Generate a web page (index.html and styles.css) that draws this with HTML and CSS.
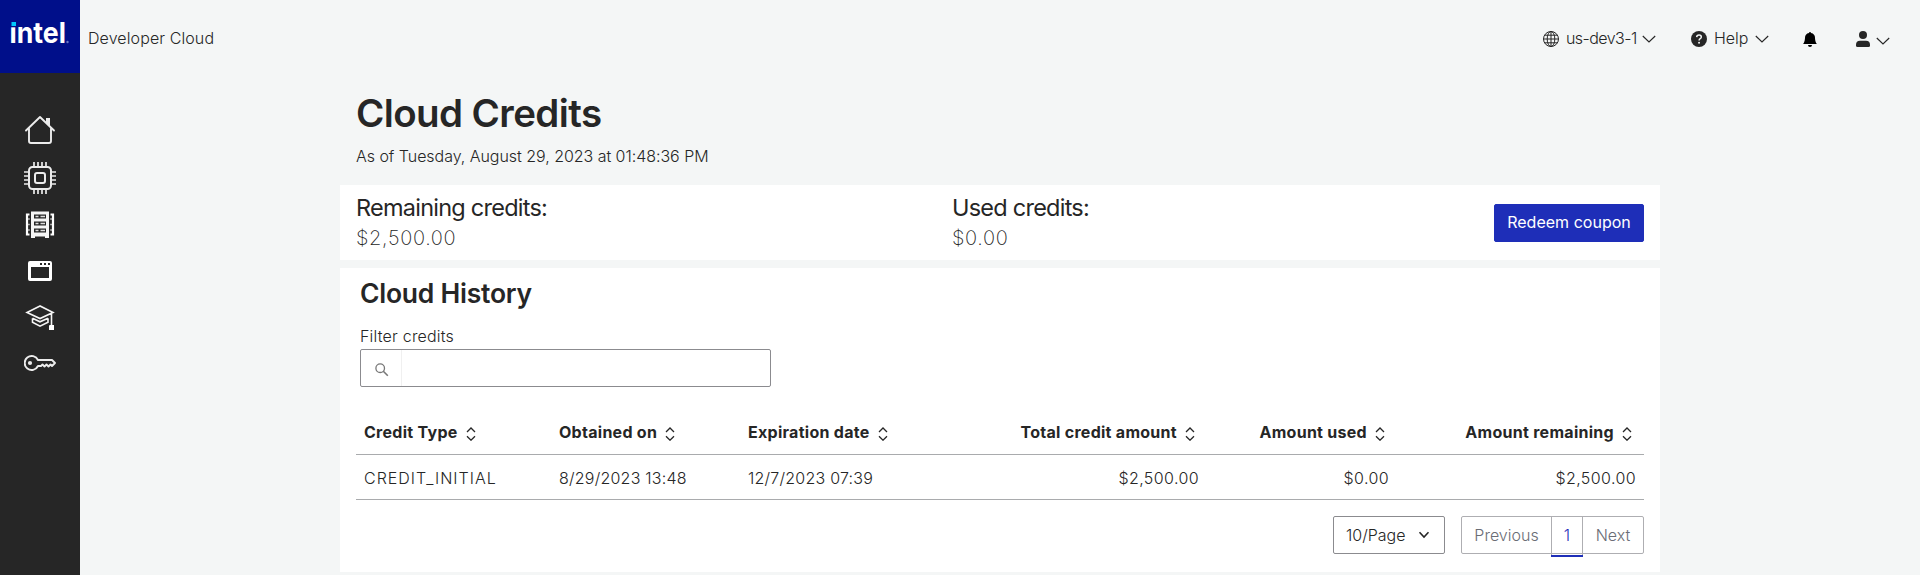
FILE: index.html
```
<!DOCTYPE html>
<html lang="en">
<head>
<meta charset="utf-8">
<title>Cloud Credits</title>
<link rel="stylesheet" href="styles.css">
</head>
<body>
<svg class="defs" width="0" height="0">
  <symbol id="sort" viewBox="0 0 10 14"><path d="M1 5 5 1l4 4M1 9.2l4 4 4-4" fill="none" stroke="#262626" stroke-width="1.300"/></symbol>
  <symbol id="chev" viewBox="0 0 14 8"><path d="m.8 1 6.2 6 6.200-6" fill="none" stroke="#262626" stroke-width="1.150"/></symbol>
</svg>
<div class="app">
  <nav class="sidebar">
    <a class="brand">
      <svg width="80" height="73" viewBox="0 0 80 73">
        <text class="brand-text" x="9.500" y="43.200" textLength="56.500" lengthAdjust="spacingAndGlyphs">intel</text>
        <path d="M8 18h9.500v9.300H8z" fill="#000f8a"/>
        <path d="M11.500 22h4.500v4h-4.500z" fill="#00c7fd"/>
        <circle cx="67.500" cy="42" r="1.200" fill="#6a78c4"/>
      </svg>
    </a>
    <div class="links">
      <svg class="ico" width="32" height="32" viewBox="0 0 32 32"><g fill="none" stroke="#ececec" stroke-width="1.900" stroke-linejoin="round" stroke-linecap="round"><path d="M2 16.500 16 3l14 13.500M5 14.500V27q0 2 2 2h18q2 0 2-2V14.500"/></g><path d="M22 4h4v9l-4-4z" fill="#ececec"/></svg>
      <svg class="ico" width="32" height="32" viewBox="0 0 32 32"><g fill="none" stroke="#ececec" stroke-width="2"><rect x="5" y="5" width="22" height="22" rx="3.500"/><rect x="11" y="11" width="10" height="10" rx="2"/><path d="M10 0v5m4-5v5m4-5v5m4-5v5M10 27v5m4-5v5m4-5v5m4-5v5M0 10h5m-5 4h5m-5 4h5m-5 4h5M27 10h5m-5 4h5m-5 4h5m-5 4h5" stroke-width="1.700"/></g></svg>
      <svg class="ico" width="32" height="28" viewBox="0 0 32 28"><path d="M7 .5h18V27h-4v-1.500H11V27H7z" fill="#f5f5f5"/><path d="M10 3.500h12v4H10zm0 7h12v4H10zm0 7h12v4H10z" fill="#262626"/><path d="M11.500 4.700h3v1.600h-3zm5 0h4.500v1.600h-4.500zm-5 7h3v1.600h-3zm5 0h4.500v1.600h-4.500zm-5 7h3v1.600h-3zm5 0h4.500v1.600h-4.500z" fill="#ddd"/><path d="M5.500 3.500H3v20h2.500M26.500 3.500H29v20h-2.500" fill="none" stroke="#fff" stroke-width="2.200"/><path d="M4 8h1.800M4 13.500h1.800M4 19h1.800M28 8h-1.800M28 13.500h-1.800M28 19h-1.800" stroke="#bbb" stroke-width="1.500"/></svg>
      <svg class="ico" width="32" height="32" viewBox="0 0 32 32"><path fill-rule="evenodd" d="M6 6h20q2 0 2 2v16q0 2-2 2H6q-2 0-2-2V8q0-2 2-2zm1 6v11h18V12zM16 8v2h2V8zm4 0v2h2V8zm4 0v2h2V8z" fill="#fff"/></svg>
      <svg class="ico" width="32" height="28" viewBox="0 0 32 28"><path d="M16 3 3 9.500 16 15.500 29 9.500zM8.500 15.200v4l7.500 4 8-4v-4M8.500 15.200l7.500 3.600 8-3.600M27.500 10v12" fill="none" stroke="#f5f5f5" stroke-width="1.600"/><path d="M25.500 22h4.500v5h-5v-4z" fill="#fff"/></svg>
      <svg class="ico" width="32" height="18" viewBox="0 0 32 18"><path d="M14 6h14l3 3-3 3-1.500-1.500-2 2-2-2-2 2-2-2-1.500 1.500H14A7 7 0 1 1 14 6z" fill="none" stroke="#ececec" stroke-width="1.900" stroke-linejoin="round"/><circle cx="6" cy="9" r="2.100" fill="#ececec"/></svg>
    </div>
  </nav>
  <div class="page">
    <header class="top">
      <span class="product">Developer Cloud</span>
      <div class="menu">
        <span class="item region"><svg width="16" height="16" viewBox="0 0 16 16"><g fill="none" stroke="#262626" stroke-width="1"><circle cx="8" cy="8" r="7.500"/><ellipse cx="8" cy="8" rx="3.800" ry="7.500"/><path d="M8 .5v15M.5 8h15M1.700 4.200h12.600M1.700 11.800h12.600"/></g></svg><span class="region-name">us-dev3-1</span><svg class="caret" width="14" height="8"><use href="#chev"/></svg></span>
        <span class="item help"><svg width="16" height="16" viewBox="0 0 16 16"><circle cx="8" cy="8" r="8" fill="#262626"/><path d="M5.700 6.100Q5.800 4 8.100 4q2.200 0 2.200 1.900 0 1.100-1.100 1.800-1.100.7-1.100 1.800" fill="none" stroke="#f4f6f6" stroke-width="1.500"/><circle cx="8.050" cy="11.700" r="1" fill="#f4f6f6"/></svg><span>Help</span><svg class="caret" width="14" height="8"><use href="#chev"/></svg></span>
        <svg class="bell" width="16" height="16" viewBox="0 0 16 16"><path d="M8 16a2 2 0 0 0 2-2H6a2 2 0 0 0 2 2zm1-14.100a1 1 0 1 0-2 0A5 5 0 0 0 3 6.800C3 8 2.500 12 1 13h14c-1.500-1-2-5-2-6.200a5 5 0 0 0-4-4.900z" fill="#000"/></svg>
        <span class="item user"><svg width="14" height="16" viewBox="0 0 14 16"><circle cx="7" cy="4" r="4" fill="#262626"/><path d="M4 9.800h6q4 0 4 4V14.500q0 1.500-1.500 1.500h-11Q0 16 0 14.500v-.7q0-4 4-4z" fill="#262626"/></svg><svg class="caret" width="14" height="8"><use href="#chev"/></svg></span>
      </div>
    </header>
    <main class="content">
      <h1>Cloud Credits</h1>
      <p class="asof">As of Tuesday, August 29, 2023 at 01:48:36 PM</p>
      <section class="card summary">
        <div class="stat"><h2>Remaining credits:</h2><span>$2,500.00</span></div>
        <div class="stat"><h2>Used credits:</h2><span>$0.00</span></div>
        <button class="primary">Redeem coupon</button>
      </section>
      <section class="card history">
        <h2>Cloud History</h2>
        <label for="filter">Filter credits</label>
        <div class="search"><span class="addon"><svg width="14" height="14" viewBox="0 0 14 14"><circle cx="5.200" cy="5.200" r="4.300" fill="none" stroke="#777" stroke-width="1.300"/><path d="m8.300 8.300 4.500 4.500" stroke="#777" stroke-width="1.600"/></svg></span><input id="filter" type="text"></div>
        <table>
          <colgroup><col class="c1"><col class="c2"><col class="c3"><col class="c4"><col class="c5"><col class="c6"></colgroup>
          <thead><tr>
            <th>Credit Type<svg class="sort"><use href="#sort"/></svg></th>
            <th>Obtained on<svg class="sort"><use href="#sort"/></svg></th>
            <th>Expiration date<svg class="sort"><use href="#sort"/></svg></th>
            <th class="num">Total credit amount<svg class="sort"><use href="#sort"/></svg></th>
            <th class="num">Amount used<svg class="sort"><use href="#sort"/></svg></th>
            <th class="num">Amount remaining<svg class="sort"><use href="#sort"/></svg></th>
          </tr></thead>
          <tbody><tr>
            <td class="type">CREDIT_INITIAL</td><td>8/29/2023 13:48</td><td>12/7/2023 07:39</td>
            <td class="num">$2,500.00</td><td class="num">$0.00</td><td class="num">$2,500.00</td>
          </tr></tbody>
        </table>
        <div class="paging">
          <span class="size">10/Page<svg width="12" height="8" viewBox="0 0 12 8"><path d="m1.500 1.300 4.500 4.700 4.500-4.700" fill="none" stroke="#262626" stroke-width="1.600"/></svg></span>
          <div class="pages"><span class="prev">Previous</span><span class="current">1</span><span class="next">Next</span></div>
        </div>
      </section>
    </main>
  </div>
</div>
</body>
</html>
```
FILE: styles.css
```
* { box-sizing: border-box; }
body {
  margin: 0;
  background: #f4f6f6;
  color: #262626;
  font: 300 16px/24px Inter, "Open Sans", sans-serif;
  overflow: hidden;
}
h1, h2, p { margin: 0; }
svg { display: block; flex: none; }
.defs { position: absolute; }
.app { display: flex; height: 575px; }

.sidebar { width: 80px; background: #262626; flex: none; }
.brand { display: block; height: 73px; background: #000f8a; }
.brand-text { font: 700 29px Inter, sans-serif; fill: #fff; }
.links {
  display: grid;
  justify-items: center;
  align-items: center;
  grid-template-rows: 48px 48px 46px 46px 46px 46px;
  padding-top: 33px;
}

.page { flex: 1; min-width: 0; }
.top {
  height: 76px;
  padding: 0 30px 0 8px;
  display: flex;
  align-items: center;
  justify-content: space-between;
}
.product { letter-spacing: .1px; }
.menu { display: flex; align-items: center; }
.item { display: flex; align-items: center; height: 24px; }
.item span { margin-left: 7px; }
.caret { margin-left: 6px; margin-top: 1px; }
.region { width: 148px; }
.region-name { width: 70px; letter-spacing: -.55px; white-space: nowrap; }
.help { width: 111px; }
.help span { width: 35px; }
.bell { margin-top: 1px; margin-right: 38px; }
.user svg:first-child { margin-top: 2px; }
.user .caret { margin-top: 6px; margin-left: 6px; }
.region svg:first-child, .help svg:first-child { margin-top: 2px; }

.content { width: 1320px; margin-left: 260px; }
h1 {
  padding: 13px 16px 0;
  height: 61px;
  font-size: 38.5px;
  font-weight: 600;
  line-height: 48px;
  letter-spacing: -.6px;
}
.asof { margin-top: 7px; padding-left: 16px; letter-spacing: -.04px; }
.card { background: #fff; }
.summary {
  margin-top: 17px;
  height: 75px;
  padding: 0 16px;
  display: grid;
  grid-template-columns: 596px 1fr auto;
  align-items: center;
}
.stat h2 { font-size: 23.5px; font-weight: 400; line-height: 30px; letter-spacing: -.76px; }
.stat span { display: block; font-size: 20px; font-weight: 200; line-height: 30px; letter-spacing: .65px; }
.primary {
  width: 150px;
  height: 38px;
  padding: 0 0 2px;
  border: 1px solid #1e2eb8;
  border-radius: 2px;
  background: #1e2eb8;
  color: #fff;
  font: 400 16px Inter, sans-serif;
  letter-spacing: .02px;
}

.history { margin-top: 8px; height: 304px; padding: 8px 16px 0; }
.history h2 { margin-left: 4px; font-size: 26.5px; font-weight: 600; line-height: 34px; letter-spacing: -.25px; }
.history label { display: block; margin: 14px 0 1px 4px; letter-spacing: .2px; }
.search {
  width: 411px;
  height: 38px;
  margin-left: 4px;
  display: flex;
  border: 1px solid #8b8b8f;
  border-radius: 2px;
}
.addon { width: 41px; display: flex; align-items: center; padding: 4px 0 0 14px; border-right: 1px solid #f0f0f0; }
.search input { flex: 1; border: 0; background: none; outline: 0; }

table { width: 1288px; margin-top: 22px; table-layout: fixed; border-collapse: separate; border-spacing: 0; }
.c1 { width: 195px; }
.c2 { width: 189px; }
.c3 { width: 190px; }
.c4 { width: 277px; }
.c5 { width: 190px; }
.c6 { width: 247px; }
th, td { padding: 0 8px; text-align: left; white-space: nowrap; border-bottom: 1px solid #a9abad; letter-spacing: .22px; }
th { height: 46px; font-weight: 700; letter-spacing: .28px; }
td { height: 45px; padding-top: 2px; }
.type { letter-spacing: 1px; }
.num { text-align: right; }
td.num { letter-spacing: .4px; }
.sort { display: inline-block; width: 10px; height: 14px; margin-left: 8px; vertical-align: -3px; }
th.num .sort { margin-right: 4px; }

.paging { display: flex; justify-content: flex-end; gap: 16px; margin-top: 16px; }
.size {
  width: 112px;
  height: 38px;
  padding: 0 14px 0 12px;
  display: flex;
  align-items: center;
  justify-content: space-between;
  border: 1px solid #8b8b8f;
  border-radius: 2px;
}
.pages { display: flex; width: 183px; height: 38px; border: 1px solid #aeaeb2; border-radius: 2px; color: #6a6d75; line-height: 36px; text-align: center; }
.prev { width: 89px; }
.current { width: 32px; height: 38px; border: solid #aeaeb2; border-width: 0 1px; box-shadow: 0 2px #1e2eb8; color: #1e2eb8; }
.next { flex: 1; }
```
